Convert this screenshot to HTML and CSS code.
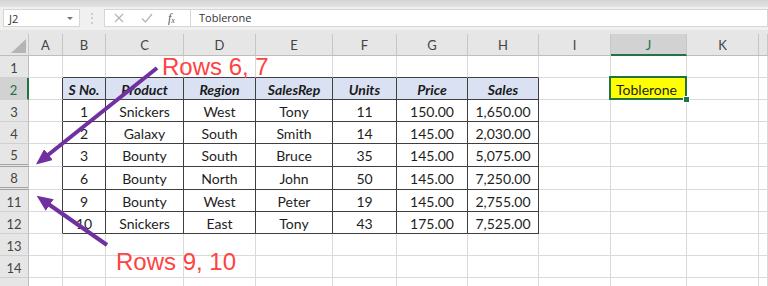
FILE: index.html
```html
<!DOCTYPE html>
<html lang="en">
<head>
    <meta charset="UTF-8">
    <meta name="viewport" content="width=device-width, initial-scale=1.0">
    <title>hidden rows</title>
    <link rel="stylesheet" href="styles.css">
</head>
<body>
    <div class="app">
        <div class="topstrip"></div>
        <div class="formulabar">
            <div class="namebox"><span>J2</span><span class="caret"></span></div>
            <div class="grip">&#8942;</div>
            <div class="fxbox">
                <svg class="btn" width="10" height="10" viewBox="0 0 10 10"><path d="M1 1 L9 9 M9 1 L1 9" stroke="#b4b4b4" stroke-width="1.2" fill="none"/></svg>
                <svg class="btn" width="12" height="10" viewBox="0 0 12 10"><path d="M1 5.5 L4.5 9 L11 1" stroke="#b4b4b4" stroke-width="1.2" fill="none"/></svg>
                <span class="fx">f<sub>x</sub></span>
            </div>
            <div class="formula">Toblerone</div>
        </div>

        <div class="sheet" id="sheet"></div>

        <svg class="arrows" width="768" height="286" viewBox="0 0 768 286">
            <defs>
                <marker id="head" markerUnits="userSpaceOnUse" markerWidth="16" markerHeight="14" refX="7" refY="7" orient="auto">
                    <path d="M0 0 L16 7 L0 14 Z" fill="#7030a0"/>
                </marker>
            </defs>
            <line x1="157" y1="68" x2="43" y2="159" stroke="#7030a0" stroke-width="4" marker-end="url(#head)"/>
            <line x1="107" y1="245" x2="44" y2="201" stroke="#7030a0" stroke-width="4" marker-end="url(#head)"/>
        </svg>
        <div class="note note-top">Rows 6, 7</div>
        <div class="note note-bottom">Rows 9, 10</div>
    </div>

    <script>
        //la ultima columna (L) queda fuera de la ventana, sin letra visible
        const cols = ["A", "B", "C", "D", "E", "F", "G", "H", "I", "J", "K", ""];
        const rows = [1, 2, 3, 4, 5, 8, 11, 12, 13, 14, 15];
        const data = {
            2: ["S No.", "Product", "Region", "SalesRep", "Units", "Price", "Sales"],
            3: ["1", "Snickers", "West", "Tony", "11", "150.00", "1,650.00"],
            4: ["2", "Galaxy", "South", "Smith", "14", "145.00", "2,030.00"],
            5: ["3", "Bounty", "South", "Bruce", "35", "145.00", "5,075.00"],
            8: ["6", "Bounty", "North", "John", "50", "145.00", "7,250.00"],
            11: ["9", "Bounty", "West", "Peter", "19", "145.00", "2,755.00"],
            12: ["10", "Snickers", "East", "Tony", "43", "175.00", "7,525.00"]
        };

        const sheet = document.getElementById("sheet");
        let html = '<div class="corner"></div>';

        //cabecera de columnas
        cols.forEach(function(c) {
            html += '<div class="ch' + (c === "J" ? " sel" : "") + '">' + c + '</div>';
        });

        rows.forEach(function(r) {
            let cls = "rh";
            if (r === 2) cls += " sel";
            if (r === 5 || r === 8) cls += " hid";
            //la fila 15 queda cortada por abajo, sin numero visible
            html += '<div class="' + cls + '">' + (r === 15 ? "" : r) + '</div>';

            cols.forEach(function(c, i) {
                let cell = "c";
                let text = "";
                const inTable = i >= 1 && i <= 7 && data[r];
                if (inTable) {
                    cell += " t";
                    if (r === 2) cell += " th";
                    text = data[r][i - 1];
                }
                if (r === 1 && i >= 1 && i <= 7) cell += " above";
                if (i === 0 && data[r]) cell += " left";
                if (r === 2 && c === "J") {
                    cell += " pick";
                    text = "Toblerone";
                }
                html += '<div class="' + cell + '">' + text + '</div>';
            });
        });

        sheet.innerHTML = html;
    </script>
</body>
</html>
```
FILE: styles.css
```css
body {
    margin: 0;
    font-family: Lato, "Open Sans", sans-serif;
    background-color: #fff;
}

.app {
    position: relative;
    width: 768px;
    height: 286px;
    overflow: hidden;
}

.topstrip {
    height: 7px;
    background: linear-gradient(#d4d4d4, #e2e2e2);
}

.formulabar {
    display: flex;
    height: 23px;
    padding-top: 2px;
    box-sizing: border-box;
    background-color: #f0f0f0;
}

.namebox {
    width: 77px;
    height: 18px;
    margin-left: 3px;
    box-sizing: border-box;
    border: 1px solid #d6d6d6;
    background-color: #fff;
    display: flex;
    align-items: center;
    justify-content: space-between;
    padding: 0 6px 0 5px;
    font-family: "Open Sans", sans-serif;
    font-size: 11px;
    color: #333;
}

.caret {
    border-left: 3px solid transparent;
    border-right: 3px solid transparent;
    border-top: 3px solid #777;
}

.grip {
    width: 24px;
    text-align: center;
    color: #bdbdbd;
    font-size: 12px;
    line-height: 18px;
}

.fxbox {
    width: 87px;
    height: 18px;
    box-sizing: border-box;
    border: 1px solid #d6d6d6;
    background-color: #fff;
    display: flex;
    align-items: center;
    padding-left: 9px;
    gap: 17px;
}

.fx {
    font-family: "Liberation Serif", serif;
    font-style: italic;
    font-size: 12px;
    color: #555;
    margin-left: -2px;
}

.fx sub {
    font-size: 8px;
    vertical-align: -1px;
}

.formula {
    flex: 1;
    height: 18px;
    box-sizing: border-box;
    border: 1px solid #d6d6d6;
    border-left: none;
    background-color: #fff;
    padding-left: 8px;
    font-family: "Open Sans", sans-serif;
    font-size: 11px;
    line-height: 16px;
    color: #333;
}

.sheet {
    display: grid;
    grid-template-columns: 29px 34px 43px 78px 72px 77px 64px 71px 71px 72px 76px 72px 1fr;
    grid-template-rows: 22px 22px 22px 22px 22px 23px 23px 22px 22px 22px 22px 22px;
    padding-top: 4px;
    background-color: #e6e6e6;
}

.corner {
    position: relative;
    background-color: #e6e6e6;
    border-right: 1px solid #c8c8c8;
    border-bottom: 1px solid #bdbdbd;
}

.corner::after {
    content: "";
    position: absolute;
    right: 2px;
    bottom: 2px;
    width: 15px;
    height: 14px;
    background-color: #b5b5b5;
    clip-path: polygon(100% 0, 100% 100%, 0 100%);
}

.ch,
.rh {
    box-sizing: border-box;
    background-color: #e6e6e6;
    color: #444;
    font-size: 13px;
    display: flex;
    align-items: center;
    justify-content: center;
}

.ch {
    border-right: 1px solid #c6c6c6;
    border-bottom: 1px solid #bdbdbd;
    padding-top: 1px;
}

.ch.sel {
    background-color: #d2d2d2;
    border-bottom: 2px solid #217346;
    color: #217346;
}

.rh {
    border-right: 1px solid #bdbdbd;
    border-bottom: 1px solid #d0d0d0;
    padding-top: 2px;
}

.rh.sel {
    background-color: #d2d2d2;
    border-right: 2px solid #217346;
    color: #217346;
}

.rh.hid {
    border-bottom: 3px double #a2a2a2;
}

.c {
    box-sizing: border-box;
    background-color: #fff;
    border-right: 1px solid #dadada;
    border-bottom: 1px solid #dadada;
    font-size: 14px;
    color: #1e1e1e;
    display: flex;
    align-items: center;
    justify-content: center;
    padding-top: 1px;
    white-space: nowrap;
}

.c.t {
    border-right-color: #3f3f3f;
    border-bottom-color: #3f3f3f;
}

.c.th {
    background-color: #d9e1f2;
    font-weight: bold;
    font-style: italic;
    color: #1a1a1a;
}

.c.above {
    border-bottom-color: #3f3f3f;
}

.c.left {
    border-right-color: #3f3f3f;
}

.c.pick {
    position: relative;
    background-color: #ffff00;
    justify-content: flex-start;
    padding-left: 5px;
}

.c.pick::after {
    content: "";
    position: absolute;
    left: -2px;
    top: -2px;
    right: -1px;
    bottom: -1px;
    border: 2px solid #217346;
}

.c.pick::before {
    content: "";
    position: absolute;
    right: -4px;
    bottom: -4px;
    width: 5px;
    height: 5px;
    background-color: #217346;
    border: 1px solid #fff;
    z-index: 1;
}

.arrows {
    position: absolute;
    left: 0;
    top: 0;
}

.note {
    position: absolute;
    font-family: "Liberation Sans", Arial, sans-serif;
    font-size: 24px;
    line-height: 24px;
    color: #ff4242;
}

.note-top {
    left: 162px;
    top: 55px;
}

.note-bottom {
    left: 116px;
    top: 250px;
}
```
